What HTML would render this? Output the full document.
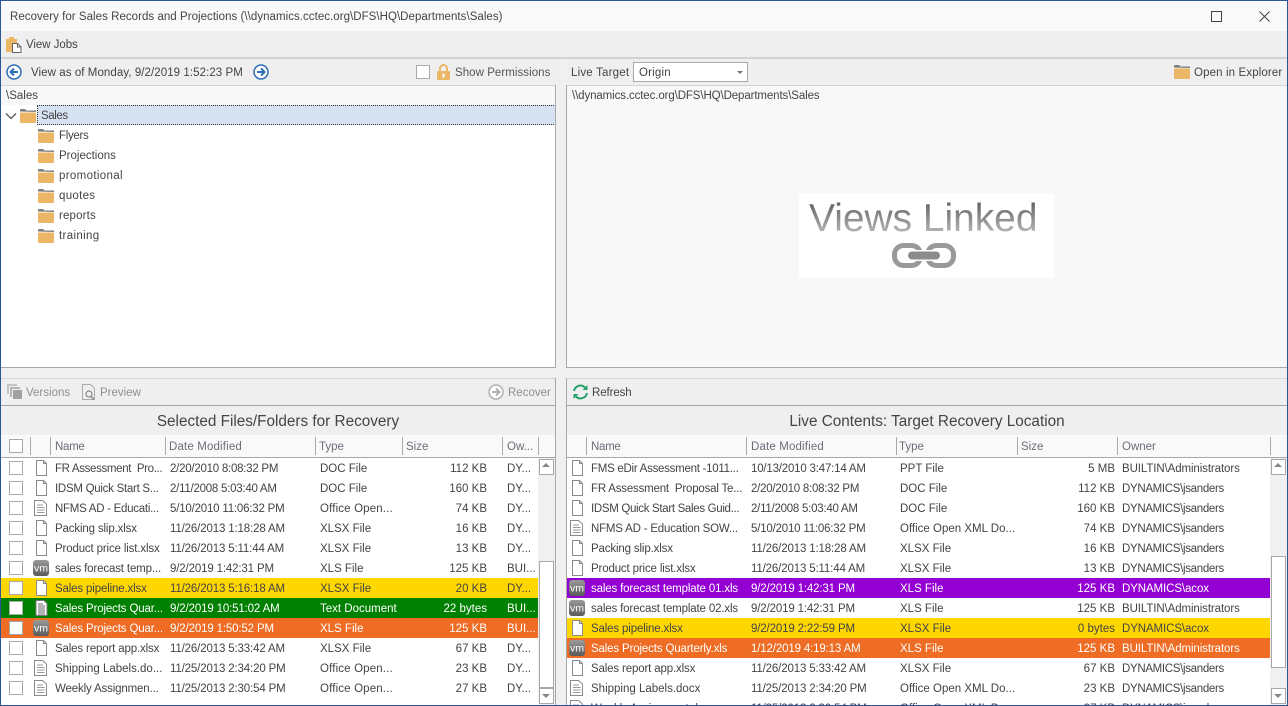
<!DOCTYPE html>
<html><head><meta charset="utf-8"><style>
html,body{margin:0;padding:0}
body{width:1288px;height:706px;overflow:hidden;position:relative;background:#f0f0f0;font:11.5px "Liberation Sans",sans-serif;color:#444}
.a,.t,.r{position:absolute}
.t{white-space:nowrap;line-height:20px;height:20px;margin-top:1px}
.g{color:#8f8f8f}
.h{color:#6d6d7a}
.w{color:#fff}
.sz{text-align:right}
.r{height:20px}
.d{letter-spacing:-.15px}
.n{letter-spacing:-.15px}
.c{letter-spacing:-.27px}
.q{letter-spacing:-.34px}
.y{letter-spacing:-.32px}
.b{letter-spacing:-.1px}
.cb{position:absolute;width:12px;height:12px;background:#fff;border:1px solid #a8a8a8}
.sep{position:absolute;width:1px;background:#a9a9a9;height:18px;top:437px}
svg{position:absolute;overflow:visible}
</style></head><body>
<svg width="0" height="0" style="position:absolute"><defs>
<symbol id="fo" viewBox="0 0 16 14"><path d="M0 2.5V1q0-1 1-1h4l1.500 1.500H16v1.500z" fill="#7d7d7d"/><rect x="0" y="3.500" width="16" height="10.500" rx="1" fill="#ebb665"/></symbol>
<symbol id="do" viewBox="0 0 13 16"><path d="M1.500.5h7l3 3v12h-10z" fill="#fff" stroke="#8a8a8a"/><path d="M8.500.5v3h3" fill="none" stroke="#8a8a8a"/></symbol>
<symbol id="tx" viewBox="0 0 13 16"><path d="M.5.5h8l4 3.500v11.500H.5z" fill="#fff" stroke="#8a8a8a"/><path d="M3 5h6M3 7.500h7.500M3 10h7.500M3 12.500h7.500" stroke="#9a9a9a"/></symbol>
<symbol id="gt" viewBox="0 0 13 16"><path d="M1 .5h8l3 3v12H1z" fill="#fff" stroke="#777"/><path d="M3 4h5M3 6h7M3 8h7M3 10h7M3 12h7M3 14h7" stroke="#666"/></symbol>
<symbol id="vm" viewBox="0 0 16 16"><defs><linearGradient id="vg" x1="0" y1="0" x2="0" y2="1"><stop offset="0" stop-color="#9a9a9a"/><stop offset="1" stop-color="#5a5a5a"/></linearGradient></defs><rect width="16" height="16" rx="3" fill="url(#vg)"/><text x="8" y="11.500" font-family="Liberation Sans" font-size="10.500" fill="#fff" text-anchor="middle">vm</text></symbol>
</defs></svg>

<!-- title -->
<div class="a" style="left:0;top:0;width:1288px;height:31px;background:#f9f9f9"></div>
<div class="t" style="left:10px;top:6px;letter-spacing:.04px">Recovery for Sales Records and Projections (\\dynamics.cctec.org\DFS\HQ\Departments\Sales)</div>
<div class="a" style="left:1211px;top:11px;width:9px;height:9px;border:1px solid #444"></div>
<svg style="left:1259px;top:11px" width="11" height="11"><path d="M.5.500l10 10M10.500.500l-10 10" stroke="#444" fill="none"/></svg>

<!-- toolbar -->
<div class="a" style="left:0;top:31px;width:1288px;height:26px;background:#efefef"></div>
<div class="a" style="left:0;top:57px;width:1288px;height:2px;background:#d2d2d2"></div>
<svg style="left:6px;top:36px" width="16" height="17"><path d="M0 3h3V1h5v2h3v13H0z" fill="#ebb665"/><path d="M6.500 7.500h5l3.500 3.500v5.500H6.500z" fill="#fff" stroke="#666"/><path d="M11.500 7.500V11H15" fill="none" stroke="#666"/></svg>
<div class="t" style="left:26px;top:34px;letter-spacing:-.05px">View Jobs</div>

<!-- upper left -->
<div class="a" style="left:1px;top:59px;width:555px;height:26px;background:#efefef"></div>
<svg style="left:6px;top:64px" width="16" height="16"><circle cx="8" cy="8" r="7" fill="#fff" stroke="#2f6fb5" stroke-width="1.500"/><path d="M12 8H5M8 4.500 4.500 8 8 11.500" fill="none" stroke="#2f6fb5" stroke-width="2"/></svg>
<div class="t" style="left:31px;top:62px;letter-spacing:.07px">View as of Monday, 9/2/2019 1:52:23 PM</div>
<svg style="left:253px;top:64px" width="16" height="16"><circle cx="8" cy="8" r="7" fill="#fff" stroke="#2f6fb5" stroke-width="1.500"/><path d="M4 8h7M8 4.500 11.500 8 8 11.500" fill="none" stroke="#2f6fb5" stroke-width="2"/></svg>
<div class="cb" style="left:416px;top:65px"></div>
<svg style="left:437px;top:64px" width="13" height="16"><path d="M3 7V4.500a3.500 3.500 0 0 1 7 0V7" fill="none" stroke="#ebb665" stroke-width="2"/><rect y="7" width="13" height="9" rx="1" fill="#ebb665"/><rect x="5.500" y="9.500" width="2" height="4" fill="#fff"/></svg>
<div class="t" style="left:455px;top:62px;color:#555;letter-spacing:.05px">Show Permissions</div>
<div class="a" style="left:1px;top:85px;width:554px;height:19px;background:#f8f8f8;border-top:1px solid #d4d4d4;border-bottom:1px solid #d4d4d4"></div>
<div class="t" style="left:6px;top:85px">\Sales</div>
<div class="a" style="left:1px;top:105px;width:554px;height:262px;background:#fff"></div>
<div class="a" style="left:37px;top:105px;width:518px;height:18px;background:#d6e1f2;border-top:1px dotted #333;border-bottom:1px dotted #333;border-left:1px dotted #333"></div>
<svg style="left:5px;top:112px" width="12" height="8"><path d="M1 1.500l5 5 5-5" fill="none" stroke="#555" stroke-width="1.300"/></svg>
<svg style="left:20px;top:109px" width="16" height="14"><use href="#fo"/></svg>
<div class="t" style="left:41px;top:105px;letter-spacing:-.4px">Sales</div>
<svg style="left:38px;top:129px" width="16" height="14"><use href="#fo"/></svg><div class="t" style="left:59px;top:125px;letter-spacing:-.3px">Flyers</div>
<svg style="left:38px;top:149px" width="16" height="14"><use href="#fo"/></svg><div class="t" style="left:59px;top:145px">Projections</div>
<svg style="left:38px;top:169px" width="16" height="14"><use href="#fo"/></svg><div class="t" style="left:59px;top:165px;letter-spacing:.35px">promotional</div>
<svg style="left:38px;top:189px" width="16" height="14"><use href="#fo"/></svg><div class="t" style="left:59px;top:185px;letter-spacing:.3px">quotes</div>
<svg style="left:38px;top:209px" width="16" height="14"><use href="#fo"/></svg><div class="t" style="left:59px;top:205px;letter-spacing:.15px">reports</div>
<svg style="left:38px;top:229px" width="16" height="14"><use href="#fo"/></svg><div class="t" style="left:59px;top:225px;letter-spacing:.35px">training</div>
<div class="a" style="left:555px;top:85px;width:1px;height:283px;background:#a8a8a8"></div>
<div class="a" style="left:1px;top:367px;width:555px;height:1px;background:#a8a8a8"></div>

<!-- upper right -->
<div class="a" style="left:566px;top:59px;width:722px;height:26px;background:#efefef"></div>
<div class="t" style="left:571px;top:62px;letter-spacing:.2px">Live Target</div>
<div class="a" style="left:633px;top:62px;width:113px;height:18px;background:#fff;border:1px solid #a8a8a8"></div>
<div class="t" style="left:639px;top:62px;letter-spacing:.2px">Origin</div>
<div class="a" style="left:737px;top:71px;width:0;height:0;border:3px solid transparent;border-top:3px solid #777"></div>
<svg style="left:1174px;top:65px" width="16" height="14"><use href="#fo"/></svg>
<div class="t" style="left:1194px;top:62px;letter-spacing:.13px">Open in Explorer</div>
<div class="a" style="left:567px;top:85px;width:720px;height:19px;background:#f8f8f8;border-top:1px solid #d4d4d4;border-bottom:1px solid #d4d4d4"></div>
<div class="t" style="left:572px;top:85px;letter-spacing:-.11px">\\dynamics.cctec.org\DFS\HQ\Departments\Sales</div>
<div class="a" style="left:567px;top:105px;width:720px;height:262px;background:#f8f8f8"></div>
<div class="a" style="left:566px;top:85px;width:1px;height:283px;background:#a8a8a8"></div>
<div class="a" style="left:566px;top:367px;width:722px;height:1px;background:#a8a8a8"></div>
<div class="a" style="left:799px;top:193px;width:255px;height:85px;background:#fff"></div>
<div class="t" style="left:809px;top:196px;line-height:44px;height:44px;font-size:38.900px;background:linear-gradient(#666 15%,#b4b4b4 80%);-webkit-background-clip:text;background-clip:text;color:transparent">Views Linked</div>
<svg style="left:892px;top:243px" width="64" height="25"><rect x="2.500" y="2.500" width="26" height="20" rx="9" fill="none" stroke="#999" stroke-width="5"/><rect x="35.500" y="2.500" width="26" height="20" rx="9" fill="none" stroke="#999" stroke-width="5"/><rect x="15" y="8.500" width="34" height="8" rx="4" fill="#fff" stroke="#fff" stroke-width="3"/><rect x="16" y="8.500" width="32" height="8" rx="4" fill="#8c8c8c"/></svg>

<!-- lower toolbars -->
<div class="a" style="left:1px;top:378px;width:555px;height:57px;background:#efefef;border-top:1px solid #d6d6d6;box-sizing:border-box"></div>
<div class="a" style="left:566px;top:378px;width:722px;height:57px;background:#efefef;border-top:1px solid #d6d6d6;box-sizing:border-box"></div>
<div class="a" style="left:1px;top:405px;width:555px;height:1px;background:#a8a8a8"></div>
<div class="a" style="left:566px;top:405px;width:722px;height:1px;background:#a8a8a8"></div>
<div class="a" style="left:555px;top:378px;width:1px;height:328px;background:#a8a8a8"></div>
<div class="a" style="left:566px;top:378px;width:1px;height:328px;background:#a8a8a8"></div>
<svg style="left:7px;top:384px" width="15" height="15"><path d="M0 0h10v2H2v8H0z" fill="#c4c4c4"/><path d="M3 3h10v2H5v8H3z" fill="#b4b4b4"/><rect x="6" y="6" width="9" height="9" fill="#a0a0a0"/></svg>
<div class="t g" style="left:26px;top:382px">Versions</div>
<svg style="left:82px;top:384px" width="14" height="16"><path d="M.5.500h8l4 4v11H.5z" fill="none" stroke="#aaa"/><circle cx="7" cy="10" r="3" fill="none" stroke="#888" stroke-width="1.200"/><path d="M9 12.500l3 3" stroke="#888" stroke-width="1.500"/></svg>
<div class="t g" style="left:100px;top:382px">Preview</div>
<svg style="left:488px;top:384px" width="16" height="16"><circle cx="8" cy="8" r="7" fill="#fff" stroke="#b0b0b0" stroke-width="1.500"/><path d="M4 8h7M8 4.500 11.500 8 8 11.500" fill="none" stroke="#b0b0b0" stroke-width="2"/></svg>
<div class="t g" style="left:508px;top:382px">Recover</div>
<svg style="left:572px;top:384px" width="17" height="16"><path d="M2 7a6.500 6.500 0 0 1 11-3.500" fill="none" stroke="#28a06c" stroke-width="2"/><path d="M15.500 1v5h-5z" fill="#28a06c"/><path d="M15 9a6.500 6.500 0 0 1-11 3.500" fill="none" stroke="#28a06c" stroke-width="2"/><path d="M1.500 15v-5h5z" fill="#28a06c"/></svg>
<div class="t" style="left:592px;top:382px;letter-spacing:-.1px">Refresh</div>
<div class="t" style="left:1px;width:554px;top:411px;text-align:center;font-size:15.300px">Selected Files/Folders for Recovery</div>
<div class="t" style="left:567px;width:720px;top:411px;text-align:center;font-size:15.300px">Live Contents: Target Recovery Location</div>

<!-- headers -->
<div class="a" style="left:1px;top:435px;width:554px;height:22px;background:#f9f9f9"></div>
<div class="a" style="left:567px;top:435px;width:720px;height:22px;background:#f9f9f9"></div>
<div class="a" style="left:1px;top:457px;width:554px;height:1px;background:#a8a8a8"></div>
<div class="a" style="left:567px;top:457px;width:720px;height:1px;background:#a8a8a8"></div>
<div class="cb" style="left:9px;top:439px"></div>
<div class="sep" style="left:30px"></div><div class="sep" style="left:50px"></div><div class="sep" style="left:165px"></div><div class="sep" style="left:315px"></div><div class="sep" style="left:402px"></div><div class="sep" style="left:502px"></div><div class="sep" style="left:538px"></div>
<div class="t h" style="left:55px;top:436px;letter-spacing:-.3px">Name</div><div class="t h" style="left:169px;top:436px;letter-spacing:.15px">Date Modified</div><div class="t h" style="left:319px;top:436px">Type</div><div class="t h" style="left:406px;top:436px">Size</div><div class="t h" style="left:507px;top:436px">Ow...</div>
<div class="sep" style="left:586px"></div><div class="sep" style="left:746px"></div><div class="sep" style="left:896px"></div><div class="sep" style="left:1017px"></div><div class="sep" style="left:1117px"></div><div class="sep" style="left:1270px"></div>
<div class="t h" style="left:591px;top:436px;letter-spacing:-.3px">Name</div><div class="t h" style="left:751px;top:436px;letter-spacing:.15px">Date Modified</div><div class="t h" style="left:899px;top:436px">Type</div><div class="t h" style="left:1021px;top:436px">Size</div><div class="t h" style="left:1122px;top:436px">Owner</div>

<!-- left list -->
<div class="a" style="left:1px;top:458px;width:554px;height:247px;background:#fff;overflow:hidden">
<div class="r" style="left:0;top:120px;width:537px;background:#ffd700"></div>
<div class="r" style="left:0;top:140px;width:537px;background:#008000"></div>
<div class="r" style="left:0;top:160px;width:537px;background:#ee6c23"></div>
<div class="cb" style="left:8px;top:3px"></div><svg style="left:34px;top:2px" width="13" height="16"><use href="#do"/></svg><div class="t q" style="left:54px;top:0">FR Assessment&nbsp;&nbsp;Pro...</div><div class="t d" style="left:169px;top:0;letter-spacing:-.25px">2/20/2010 8:08:32 PM</div><div class="t" style="left:319px;top:0">DOC File</div><div class="t sz" style="left:400px;width:86px;top:0">112 KB</div><div class="t" style="left:506px;top:0">DY...</div>
<div class="cb" style="left:8px;top:23px"></div><svg style="left:34px;top:22px" width="13" height="16"><use href="#do"/></svg><div class="t c" style="left:54px;top:20px">IDSM Quick Start S...</div><div class="t d" style="left:169px;top:20px;letter-spacing:-.25px">2/11/2008 5:03:40 AM</div><div class="t" style="left:319px;top:20px">DOC File</div><div class="t sz" style="left:400px;width:86px;top:20px">160 KB</div><div class="t" style="left:506px;top:20px">DY...</div>
<div class="cb" style="left:8px;top:43px"></div><svg style="left:33px;top:42px" width="13" height="16"><use href="#tx"/></svg><div class="t c" style="left:54px;top:40px">NFMS AD - Educati...</div><div class="t d" style="left:169px;top:40px;letter-spacing:-.2px">5/10/2010 11:06:32 PM</div><div class="t" style="left:319px;top:40px;letter-spacing:.15px">Office Open...</div><div class="t sz" style="left:400px;width:86px;top:40px">74 KB</div><div class="t" style="left:506px;top:40px">DY...</div>
<div class="cb" style="left:8px;top:63px"></div><svg style="left:34px;top:62px" width="13" height="16"><use href="#do"/></svg><div class="t n" style="left:54px;top:60px">Packing slip.xlsx</div><div class="t d" style="left:169px;top:60px">11/26/2013 1:18:28 AM</div><div class="t" style="left:319px;top:60px">XLSX File</div><div class="t sz" style="left:400px;width:86px;top:60px">16 KB</div><div class="t" style="left:506px;top:60px">DY...</div>
<div class="cb" style="left:8px;top:83px"></div><svg style="left:34px;top:82px" width="13" height="16"><use href="#do"/></svg><div class="t n" style="left:54px;top:80px">Product price list.xlsx</div><div class="t d" style="left:169px;top:80px">11/26/2013 5:11:44 AM</div><div class="t" style="left:319px;top:80px">XLSX File</div><div class="t sz" style="left:400px;width:86px;top:80px">13 KB</div><div class="t" style="left:506px;top:80px">DY...</div>
<div class="cb" style="left:8px;top:103px"></div><svg style="left:32px;top:102px" width="16" height="16"><use href="#vm"/></svg><div class="t n" style="left:54px;top:100px">sales forecast temp...</div><div class="t d" style="left:169px;top:100px">9/2/2019 1:42:31 PM</div><div class="t" style="left:319px;top:100px">XLS File</div><div class="t sz" style="left:400px;width:86px;top:100px">125 KB</div><div class="t" style="left:506px;top:100px">BUI...</div>
<div class="cb" style="left:8px;top:123px"></div><svg style="left:34px;top:122px" width="13" height="16"><use href="#do"/></svg><div class="t n" style="left:54px;top:120px">Sales pipeline.xlsx</div><div class="t d" style="left:169px;top:120px">11/26/2013 5:16:18 AM</div><div class="t" style="left:319px;top:120px">XLSX File</div><div class="t sz" style="left:400px;width:86px;top:120px">20 KB</div><div class="t" style="left:506px;top:120px">DY...</div>
<div class="cb" style="left:8px;top:143px"></div><svg style="left:34px;top:142px" width="13" height="16"><use href="#gt"/></svg><div class="t w n" style="left:54px;top:140px">Sales Projects Quar...</div><div class="t w d" style="left:169px;top:140px">9/2/2019 10:51:02 AM</div><div class="t w" style="left:319px;top:140px">Text Document</div><div class="t sz w" style="left:400px;width:86px;top:140px">22 bytes</div><div class="t w" style="left:506px;top:140px">BUI...</div>
<div class="cb" style="left:8px;top:163px"></div><svg style="left:32px;top:162px" width="16" height="16"><use href="#vm"/></svg><div class="t w n" style="left:54px;top:160px">Sales Projects Quar...</div><div class="t w d" style="left:169px;top:160px">9/2/2019 1:50:52 PM</div><div class="t w" style="left:319px;top:160px">XLS File</div><div class="t sz w" style="left:400px;width:86px;top:160px">125 KB</div><div class="t w" style="left:506px;top:160px">BUI...</div>
<div class="cb" style="left:8px;top:183px"></div><svg style="left:34px;top:182px" width="13" height="16"><use href="#do"/></svg><div class="t n" style="left:54px;top:180px">Sales report app.xlsx</div><div class="t d" style="left:169px;top:180px">11/26/2013 5:33:42 AM</div><div class="t" style="left:319px;top:180px">XLSX File</div><div class="t sz" style="left:400px;width:86px;top:180px">67 KB</div><div class="t" style="left:506px;top:180px">DY...</div>
<div class="cb" style="left:8px;top:203px"></div><svg style="left:33px;top:202px" width="13" height="16"><use href="#tx"/></svg><div class="t" style="left:54px;top:200px">Shipping Labels.do...</div><div class="t d" style="left:169px;top:200px">11/25/2013 2:34:20 PM</div><div class="t" style="left:319px;top:200px;letter-spacing:.15px">Office Open...</div><div class="t sz" style="left:400px;width:86px;top:200px">23 KB</div><div class="t" style="left:506px;top:200px">DY...</div>
<div class="cb" style="left:8px;top:223px"></div><svg style="left:33px;top:222px" width="13" height="16"><use href="#tx"/></svg><div class="t n" style="left:54px;top:220px">Weekly Assignmen...</div><div class="t d" style="left:169px;top:220px">11/25/2013 2:30:54 PM</div><div class="t" style="left:319px;top:220px;letter-spacing:.15px">Office Open...</div><div class="t sz" style="left:400px;width:86px;top:220px">27 KB</div><div class="t" style="left:506px;top:220px">DY...</div>
</div>
<!-- left scrollbar -->
<div class="a" style="left:538px;top:458px;width:17px;height:247px;background:#f0f0f0"></div>
<div class="a" style="left:539px;top:459px;width:13px;height:14px;background:#fff;border:1px solid #a8a8a8"></div>
<div class="a" style="left:542px;top:463px;width:0;height:0;border:4px solid transparent;border-top:0;border-bottom:4px solid #888"></div>
<div class="a" style="left:539px;top:561px;width:13px;height:125px;background:#fff;border:1px solid #a8a8a8"></div>
<div class="a" style="left:539px;top:688px;width:13px;height:14px;background:#fff;border:1px solid #a8a8a8"></div>
<div class="a" style="left:542px;top:694px;width:0;height:0;border:4px solid transparent;border-bottom:0;border-top:4px solid #888"></div>

<!-- right list -->
<div class="a" style="left:567px;top:458px;width:720px;height:247px;background:#fff;overflow:hidden">
<div class="r" style="left:0;top:120px;width:703px;background:#9400d3"></div>
<div class="r" style="left:0;top:160px;width:703px;background:#ffd700"></div>
<div class="r" style="left:0;top:180px;width:703px;background:#ee6c23"></div>
<svg style="left:4px;top:2px" width="13" height="16"><use href="#do"/></svg><div class="t" style="left:24px;top:0;letter-spacing:-.27px">FMS eDir Assessment -1011...</div><div class="t d" style="left:184px;top:0;letter-spacing:-.2px">10/13/2010 3:47:14 AM</div><div class="t" style="left:333px;top:0">PPT File</div><div class="t sz" style="left:460px;width:88px;top:0">5 MB</div><div class="t b" style="left:555px;top:0">BUILTIN\Administrators</div>
<svg style="left:4px;top:22px" width="13" height="16"><use href="#do"/></svg><div class="t" style="left:24px;top:20px;letter-spacing:-.2px">FR Assessment&nbsp;&nbsp;Proposal Te...</div><div class="t d" style="left:184px;top:20px;letter-spacing:-.25px">2/20/2010 8:08:32 PM</div><div class="t" style="left:333px;top:20px">DOC File</div><div class="t sz" style="left:460px;width:88px;top:20px">112 KB</div><div class="t y" style="left:555px;top:20px">DYNAMICS\jsanders</div>
<svg style="left:4px;top:42px" width="13" height="16"><use href="#do"/></svg><div class="t" style="left:24px;top:40px;letter-spacing:-.32px">IDSM Quick Start Sales Guid...</div><div class="t d" style="left:184px;top:40px;letter-spacing:-.25px">2/11/2008 5:03:40 AM</div><div class="t" style="left:333px;top:40px">DOC File</div><div class="t sz" style="left:460px;width:88px;top:40px">160 KB</div><div class="t y" style="left:555px;top:40px">DYNAMICS\jsanders</div>
<svg style="left:3px;top:62px" width="13" height="16"><use href="#tx"/></svg><div class="t" style="left:24px;top:60px;letter-spacing:-.2px">NFMS AD - Education SOW...</div><div class="t d" style="left:184px;top:60px;letter-spacing:-.2px">5/10/2010 11:06:32 PM</div><div class="t" style="left:333px;top:60px">Office Open XML Do...</div><div class="t sz" style="left:460px;width:88px;top:60px">74 KB</div><div class="t y" style="left:555px;top:60px">DYNAMICS\jsanders</div>
<svg style="left:4px;top:82px" width="13" height="16"><use href="#do"/></svg><div class="t n" style="left:24px;top:80px">Packing slip.xlsx</div><div class="t d" style="left:184px;top:80px">11/26/2013 1:18:28 AM</div><div class="t" style="left:333px;top:80px">XLSX File</div><div class="t sz" style="left:460px;width:88px;top:80px">16 KB</div><div class="t y" style="left:555px;top:80px">DYNAMICS\jsanders</div>
<svg style="left:4px;top:102px" width="13" height="16"><use href="#do"/></svg><div class="t n" style="left:24px;top:100px">Product price list.xlsx</div><div class="t d" style="left:184px;top:100px">11/26/2013 5:11:44 AM</div><div class="t" style="left:333px;top:100px">XLSX File</div><div class="t sz" style="left:460px;width:88px;top:100px">13 KB</div><div class="t y" style="left:555px;top:100px">DYNAMICS\jsanders</div>
<svg style="left:2px;top:122px" width="16" height="16"><use href="#vm"/></svg><div class="t w n" style="left:24px;top:120px">sales forecast template 01.xls</div><div class="t w d" style="left:184px;top:120px">9/2/2019 1:42:31 PM</div><div class="t w" style="left:333px;top:120px">XLS File</div><div class="t sz w" style="left:460px;width:88px;top:120px">125 KB</div><div class="t w" style="left:555px;top:120px;letter-spacing:-.1px">DYNAMICS\acox</div>
<svg style="left:2px;top:142px" width="16" height="16"><use href="#vm"/></svg><div class="t n" style="left:24px;top:140px">sales forecast template 02.xls</div><div class="t d" style="left:184px;top:140px">9/2/2019 1:42:31 PM</div><div class="t" style="left:333px;top:140px">XLS File</div><div class="t sz" style="left:460px;width:88px;top:140px">125 KB</div><div class="t b" style="left:555px;top:140px">BUILTIN\Administrators</div>
<svg style="left:4px;top:162px" width="13" height="16"><use href="#do"/></svg><div class="t n" style="left:24px;top:160px">Sales pipeline.xlsx</div><div class="t d" style="left:184px;top:160px">9/2/2019 2:22:59 PM</div><div class="t" style="left:333px;top:160px">XLSX File</div><div class="t sz" style="left:460px;width:88px;top:160px">0 bytes</div><div class="t" style="left:555px;top:160px;letter-spacing:-.1px">DYNAMICS\acox</div>
<svg style="left:2px;top:182px" width="16" height="16"><use href="#vm"/></svg><div class="t w n" style="left:24px;top:180px">Sales Projects Quarterly.xls</div><div class="t w d" style="left:184px;top:180px">1/12/2019 4:19:13 AM</div><div class="t w" style="left:333px;top:180px">XLS File</div><div class="t sz w" style="left:460px;width:88px;top:180px">125 KB</div><div class="t w b" style="left:555px;top:180px">BUILTIN\Administrators</div>
<svg style="left:4px;top:202px" width="13" height="16"><use href="#do"/></svg><div class="t n" style="left:24px;top:200px">Sales report app.xlsx</div><div class="t d" style="left:184px;top:200px">11/26/2013 5:33:42 AM</div><div class="t" style="left:333px;top:200px">XLSX File</div><div class="t sz" style="left:460px;width:88px;top:200px">67 KB</div><div class="t y" style="left:555px;top:200px">DYNAMICS\jsanders</div>
<svg style="left:3px;top:222px" width="13" height="16"><use href="#tx"/></svg><div class="t" style="left:24px;top:220px">Shipping Labels.docx</div><div class="t d" style="left:184px;top:220px">11/25/2013 2:34:20 PM</div><div class="t" style="left:333px;top:220px">Office Open XML Do...</div><div class="t sz" style="left:460px;width:88px;top:220px">23 KB</div><div class="t y" style="left:555px;top:220px">DYNAMICS\jsanders</div>
<svg style="left:3px;top:242px" width="13" height="16"><use href="#tx"/></svg><div class="t n" style="left:24px;top:240px">Weekly Assignment.docx</div><div class="t d" style="left:184px;top:240px">11/25/2013 2:30:54 PM</div><div class="t" style="left:333px;top:240px">Office Open XML Do...</div><div class="t sz" style="left:460px;width:88px;top:240px">27 KB</div><div class="t y" style="left:555px;top:240px">DYNAMICS\jsanders</div>
</div>
<!-- right scrollbar -->
<div class="a" style="left:1270px;top:458px;width:17px;height:247px;background:#f0f0f0"></div>
<div class="a" style="left:1271px;top:459px;width:13px;height:14px;background:#fff;border:1px solid #a8a8a8"></div>
<div class="a" style="left:1274px;top:463px;width:0;height:0;border:4px solid transparent;border-top:0;border-bottom:4px solid #888"></div>
<div class="a" style="left:1271px;top:556px;width:13px;height:110px;background:#fff;border:1px solid #a8a8a8"></div>
<div class="a" style="left:1271px;top:688px;width:13px;height:14px;background:#fff;border:1px solid #a8a8a8"></div>
<div class="a" style="left:1274px;top:694px;width:0;height:0;border:4px solid transparent;border-bottom:0;border-top:4px solid #888"></div>

<!-- window border -->
<div class="a" style="left:0;top:0;width:1286px;height:704px;border:1px solid #2b579a"></div>
</body></html>
